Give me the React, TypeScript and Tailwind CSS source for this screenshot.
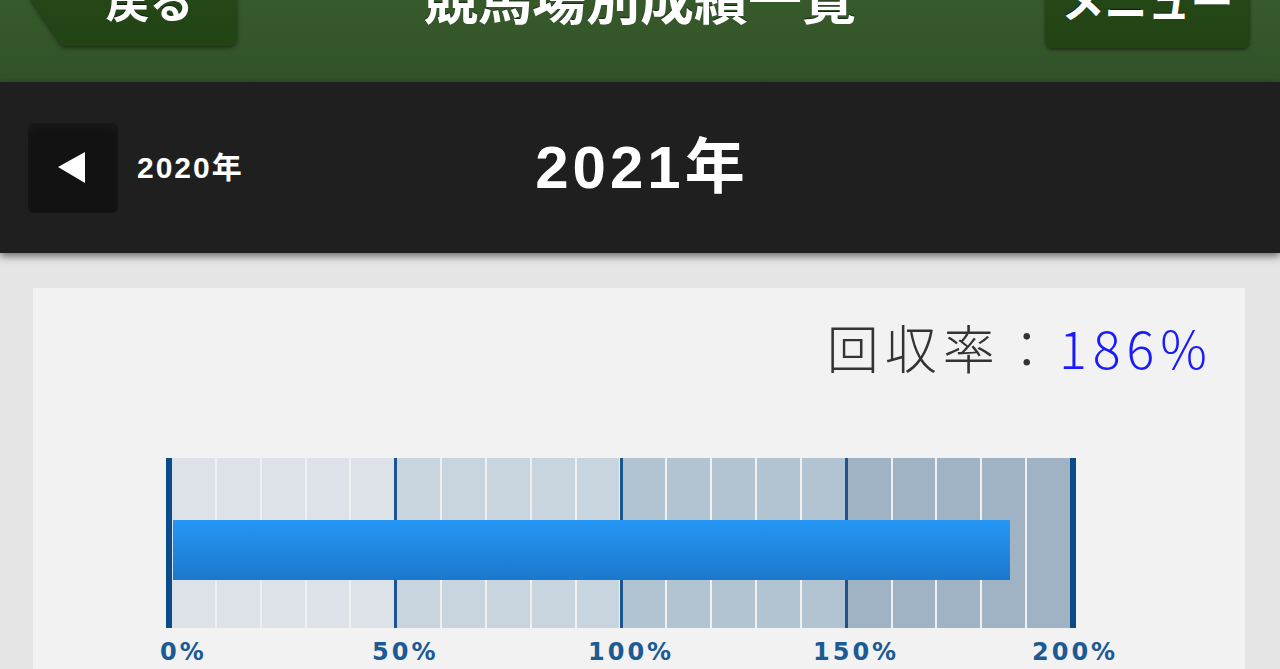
import React from "react";

const JP = "font-['Noto_Sans_CJK_JP','Noto_Sans',sans-serif]";

const groupColors = ["bg-[#dde2e9]", "bg-[#c8d4de]", "bg-[#b2c3d1]", "bg-[#9fb3c5]"];

function Group({ color }: { color: string }) {
  return (
    <div className="flex-1 h-full flex gap-[2px] bg-[#eef0f2]">
      {[0, 1, 2, 3, 4].map((i) => (
        <div key={i} className={`flex-1 h-full ${color}`} />
      ))}
    </div>
  );
}

export default function App() {
  const rate = 186;
  const barWidth = (rate / 200) * 902 - 2;
  const labels = [
    { t: "0%", x: -6 },
    { t: "50%", x: 206 },
    { t: "100%", x: 422 },
    { t: "150%", x: 647 },
    { t: "200%", x: 866 },
  ];
  return (
    <div className={`w-[1280px] h-[669px] overflow-hidden bg-[#e5e5e5] ${JP}`}>
      {/* Header */}
      <header className="relative h-[82px] overflow-hidden bg-gradient-to-b from-[#375a2a] to-[#31522a]">
        <div className="grid grid-cols-[1fr_auto_1fr] items-start">
          <div className="pl-[30px] -mt-[49px]">
            <div className="w-[207px] h-[95px] [filter:drop-shadow(0_2px_2px_rgba(0,0,0,0.45))]">
              <div className="w-full h-full flex items-center justify-center pl-[32px] bg-gradient-to-b from-[#284c19] to-[#224314] rounded-r-[8px] [clip-path:polygon(32px_0,100%_0,100%_100%,32px_100%,0_50%)]">
                <span className="text-white font-bold text-[44px] leading-none [text-shadow:0_-1px_1px_rgba(0,0,0,0.6)]">
                  戻る
                </span>
              </div>
            </div>
          </div>
          <h1 className="-mt-[30px] text-white font-bold text-[54px] leading-none [text-shadow:0_-1px_1px_rgba(0,0,0,0.6)]">
            競馬場別成績一覧
          </h1>
          <div className="justify-self-end pr-[30px] -mt-[50px]">
            <div className="w-[205px] h-[98px] rounded-[8px] flex items-center justify-center bg-gradient-to-b from-[#284c19] to-[#224314] shadow-[0_2px_3px_rgba(0,0,0,0.45)]">
              <span className="text-white font-bold text-[43px] leading-none [text-shadow:0_-1px_1px_rgba(0,0,0,0.6)]">
                メニュー
              </span>
            </div>
          </div>
        </div>
      </header>

      {/* Year band */}
      <div className="relative z-10 h-[171px] bg-[#1f1f1f] shadow-[0_3px_8px_rgba(0,0,0,0.55)] grid grid-cols-[1fr_auto_1fr] items-center">
        <div className="flex items-center pl-[28px]">
          <div className="w-[90px] h-[90px] rounded-[6px] bg-[#121212] flex items-center justify-center shadow-[inset_0_6px_10px_rgba(255,255,255,0.03)]">
            <svg width="30" height="34" viewBox="0 0 30 34" className="-ml-[2px]">
              <polygon points="1,16 28,1 28,32" fill="#ffffff" />
            </svg>
          </div>
          <span className="ml-[19px] text-white font-bold text-[30px] leading-none tracking-[2px] font-['Liberation_Sans','Noto_Sans_CJK_JP',sans-serif]">
            2020年
          </span>
        </div>
        <div className="text-white font-bold text-[60px] leading-none tracking-[4px] -mr-[4px] font-['Liberation_Sans','Noto_Sans_CJK_JP',sans-serif]">
          2021年
        </div>
        <div />
      </div>

      {/* Body */}
      <div className="pt-[35px]">
        <div className="ml-[33px] mr-[35px] h-[420px] bg-[#f2f2f2]">
          <div className="flex justify-end pr-[38px] pt-[33px]">
            <span className="text-[52px] leading-none font-light text-[#333333] tracking-[6px]">回収率：</span>
            <span className="text-[52px] leading-none font-light text-[#1a1aff] tracking-[6px] -mr-[6px]">
              {rate}%
            </span>
          </div>

          <div className="ml-[133px] mt-[85px] w-[910px]">
            <div className="relative h-[170px] flex">
              <div className="w-[6px] h-full bg-[#0a4c8a]" />
              {groupColors.map((c, i) => (
                <React.Fragment key={i}>
                  <Group color={c} />
                  {i < 3 && <div className="w-[3px] h-full bg-[#1a5590]" />}
                </React.Fragment>
              ))}
              <div className="w-[6px] h-full bg-[#0a4c8a]" />
              <div
                className="absolute left-[7px] top-[62px] h-[60px] bg-gradient-to-b from-[#2597f4] to-[#1c78cc]"
                style={{ width: `${barWidth}px` }}
              />
            </div>
            <div className="relative h-[36px] font-['DejaVu_Sans',sans-serif] font-bold text-[24px] text-[#1b5a94] tracking-[3px]">
              {labels.map((l) => (
                <span key={l.t} className="absolute top-[12px] leading-none" style={{ left: `${l.x}px` }}>
                  {l.t}
                </span>
              ))}
            </div>
          </div>
        </div>
      </div>
    </div>
  );
}
